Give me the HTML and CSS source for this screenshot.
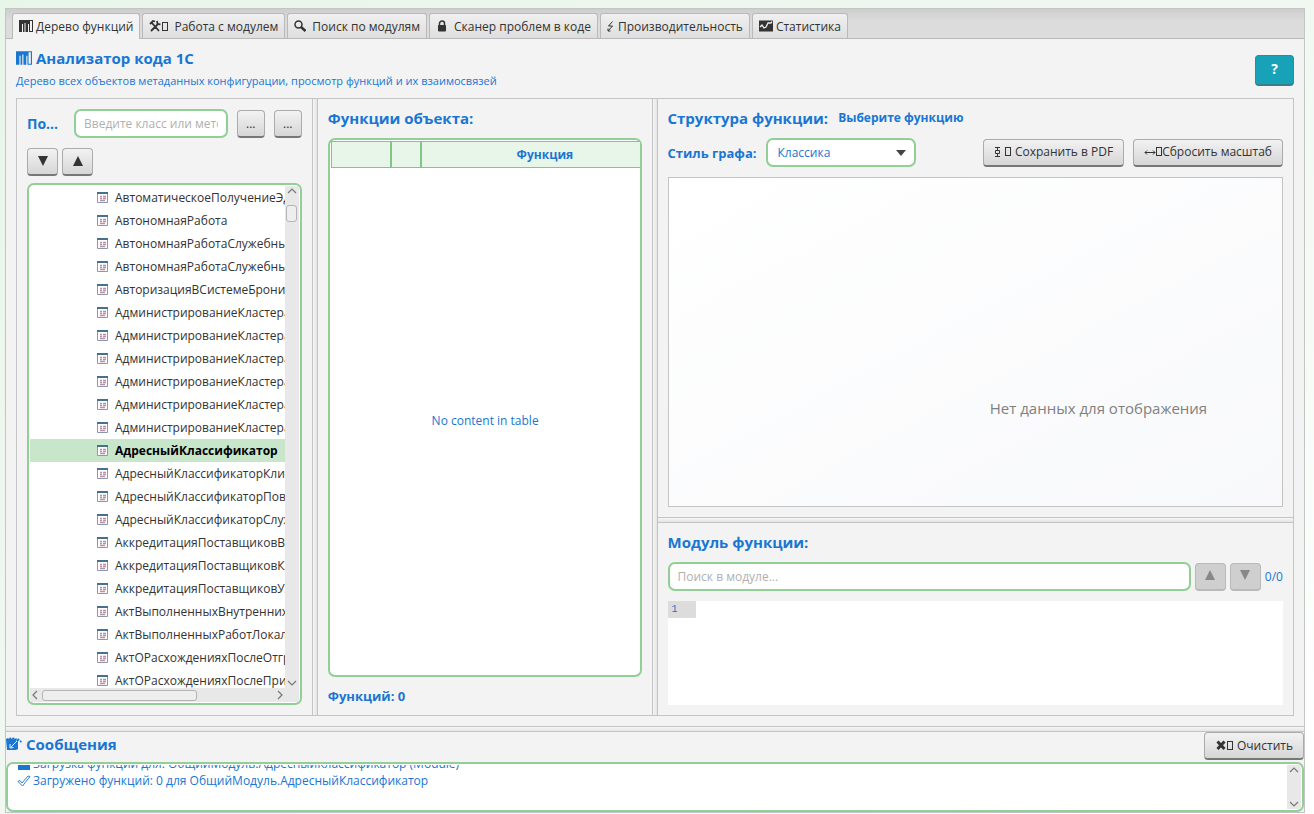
FILE: index.html
```html
<!DOCTYPE html>
<html lang="ru">
<head>
  <meta charset="UTF-8">
  <meta name="viewport" content="width=device-width, initial-scale=1.0">
  <title>Анализатор кода 1С</title>
  <link rel="stylesheet" href="styles.css">
</head>
<body>
  <svg class="sprite" aria-hidden="true">
    <symbol id="chart" viewBox="0 0 14 12">
      <path fill="currentColor" fill-rule="evenodd" d="M0 0h14v12H0zM3 4v8h1V4zM5.500 3v9h1V3zM9 4v8h1V4zM11 1v10h2V1z"/>
    </symbol>
    <symbol id="tools" viewBox="0 0 12 12">
      <path fill="none" stroke="currentColor" stroke-width="1.800" d="M3 3l7 8M9 4l-7 7M1 4l3-3 2 .5M8 1l.5 3 3 .3"/>
    </symbol>
    <symbol id="lens" viewBox="0 0 12 12">
      <circle cx="4.500" cy="4.500" r="3.500" fill="none" stroke="currentColor" stroke-width="1.500"/>
      <path stroke="currentColor" stroke-width="2.400" d="M7 7l4.500 4"/>
    </symbol>
    <symbol id="lock" viewBox="0 0 10 12">
      <path fill="none" stroke="currentColor" stroke-width="1.500" d="M2.500 6V3.500a2.500 2.500 0 0 1 5 0V6"/>
      <rect x="1" y="5" width="8" height="6.500" rx="1" fill="currentColor"/>
    </symbol>
    <symbol id="bolt" viewBox="0 0 7 12">
      <path fill="none" stroke="currentColor" d="M5.500 1.500L1.500 6h4L1 11M1 8.500V11h2.500"/>
    </symbol>
    <symbol id="trend" viewBox="0 0 14 12">
      <rect y=".5" width="14" height="11" fill="currentColor"/>
      <path fill="none" stroke="#eee" stroke-width="1.300" d="M1 7l2-2 2 3 2-1 2-4h3l1-1.500"/>
    </symbol>
    <symbol id="note" viewBox="0 0 16 14">
      <path fill="currentColor" d="M0 2l2-1 1 1 1-2 2 2 1-2 2 2 1-1 1 1-1 2 2-1v9l-2 1H1z"/>
      <path stroke="#f3f3f3" stroke-width="1" fill="none" d="M5 10l6-6M4 7v4l3.500-.5"/>
      <path stroke="currentColor" stroke-width="2" d="M11 4l2-2M14 4l1.500 1"/>
    </symbol>
    <symbol id="cabinet" viewBox="0 0 7 12">
      <path fill="none" stroke="currentColor" d="M1 1.500h5M1 10.500h5M1.500 4.500h4v3h-4zM3.500 1v3M3.500 8v3"/>
    </symbol>
    <symbol id="resize" viewBox="0 0 12 12">
      <path fill="none" stroke="currentColor" d="M1 6.500h10M3 4.500l-2 2 2 2M9 4.500l2 2-2 2"/>
    </symbol>
    <symbol id="cross" viewBox="0 0 12 12">
      <path stroke="currentColor" stroke-width="3" d="M2.500 2.500l7 7.500M9.500 2.500l-7 7.500"/>
    </symbol>
    <symbol id="check" viewBox="0 0 14 12">
      <path fill="none" stroke="currentColor" stroke-width=".9" d="M1 6.500l2-1 2 2.500L11 1l2 .5L5.500 11z"/>
    </symbol>
    <symbol id="folder" viewBox="0 0 14 12">
      <path fill="currentColor" d="M1 1h5l1 2h6v9H1z"/>
    </symbol>
    <symbol id="module" viewBox="0 0 11 11">
      <path fill="#fff" stroke="#8a97ad" d="M.5.5h10v10H.5z"/>
      <path fill="#47708f" d="M0 0h11v2H0z"/>
      <path stroke="#b98fa6" stroke-width="1.300" d="M3 4.500h2M6 4.500h3M3 6.500h2M6 6.500h3M3 8.500h5"/>
    </symbol>
    <symbol id="up" viewBox="0 0 12 12"><path fill="currentColor" d="M6 0l6 12H0z"/></symbol>
    <symbol id="down" viewBox="0 0 12 12"><path fill="currentColor" d="M6 12L0 0h12z"/></symbol>
    <symbol id="chev-up" viewBox="0 0 10 10"><path fill="none" stroke="#777" stroke-width="1.200" d="M1 7l4-4 4 4"/></symbol>
    <symbol id="chev-down" viewBox="0 0 10 10"><path fill="none" stroke="#777" stroke-width="1.200" d="M1 3l4 4 4-4"/></symbol>
    <symbol id="chev-left" viewBox="0 0 10 10"><path fill="none" stroke="#777" stroke-width="1.200" d="M7 1L3 5l4 4"/></symbol>
    <symbol id="chev-right" viewBox="0 0 10 10"><path fill="none" stroke="#777" stroke-width="1.200" d="M3 1l4 4-4 4"/></symbol>
  </svg>

  <div class="window">
    <nav class="tabs" role="tablist">
      <button class="tab active" role="tab"><svg class="icon wide"><use href="#chart"/></svg>Дерево функций</button>
      <button class="tab" role="tab"><svg class="icon"><use href="#tools"/></svg><i class="box"></i>Работа с модулем</button>
      <button class="tab" role="tab"><svg class="icon"><use href="#lens"/></svg>Поиск по модулям</button>
      <button class="tab" role="tab"><svg class="icon"><use href="#lock"/></svg>Сканер проблем в коде</button>
      <button class="tab" role="tab"><svg class="icon narrow"><use href="#bolt"/></svg>Производительность</button>
      <button class="tab" role="tab"><svg class="icon wide"><use href="#trend"/></svg>Статистика</button>
    </nav>

    <main class="content">
      <header class="header">
        <div>
          <h1><svg class="icon title-icon"><use href="#chart"/></svg>Анализатор кода 1С</h1>
          <p class="subtitle">Дерево всех объектов метаданных конфигурации, просмотр функций и их взаимосвязей</p>
        </div>
        <button class="help">?</button>
      </header>

      <div class="split">
        <section class="pane tree-pane">
          <div class="search-row">
            <label for="search">По...</label>
            <input class="field" type="text" id="search" placeholder="Введите класс или метод">
            <button class="btn dots">...</button>
            <button class="btn dots">...</button>
          </div>
          <div class="arrow-row">
            <button class="btn arrow" aria-label="Развернуть"><svg class="icon"><use href="#down"/></svg></button>
            <button class="btn arrow" aria-label="Свернуть"><svg class="icon"><use href="#up"/></svg></button>
          </div>
          <div class="tree">
            <ul class="tree-list" id="tree"></ul>
            <div class="vbar">
              <svg><use href="#chev-up"/></svg>
              <span class="thumb"></span>
              <svg class="end"><use href="#chev-down"/></svg>
            </div>
            <div class="hbar">
              <svg><use href="#chev-left"/></svg>
              <span class="thumb"></span>
              <svg class="end"><use href="#chev-right"/></svg>
            </div>
          </div>
        </section>
        <div class="divider"></div>

        <section class="pane functions-pane">
          <h2>Функции объекта:</h2>
          <div class="table-box">
            <table>
              <thead>
                <tr><th class="col-icon"></th><th class="col-flag"></th><th>Функция</th></tr>
              </thead>
            </table>
            <p class="empty">No content in table</p>
          </div>
          <p class="count">Функций: 0</p>
        </section>
        <div class="divider"></div>

        <div class="right">
          <section class="pane graph-pane">
            <div class="graph-title">
              <h2>Структура функции:</h2>
              <span class="hint">Выберите функцию</span>
            </div>
            <div class="graph-tools">
              <label for="style">Стиль графа:</label>
              <div class="select-box">
                <select class="field" id="style">
                  <option>Классика</option>
                </select>
              </div>
              <button class="btn push"><svg class="icon narrow"><use href="#cabinet"/></svg><i class="box"></i>Сохранить в PDF</button>
              <button class="btn"><svg class="icon tight"><use href="#resize"/></svg><i class="box tight"></i>Сбросить масштаб</button>
            </div>
            <div class="viewport">
              <div class="canvas">Нет данных для отображения</div>
            </div>
          </section>
          <div class="divider horizontal"></div>
          <section class="pane module-pane">
            <h2>Модуль функции:</h2>
            <div class="module-search">
              <input class="field" type="text" placeholder="Поиск в модуле..." aria-label="Поиск в модуле">
              <button class="btn arrow" disabled aria-label="Назад"><svg class="icon"><use href="#up"/></svg></button>
              <button class="btn arrow" disabled aria-label="Вперёд"><svg class="icon"><use href="#down"/></svg></button>
              <span class="found">0/0</span>
            </div>
            <div class="code"><span class="line-no">1</span></div>
          </section>
        </div>
      </div>
    </main>

    <div class="divider horizontal"></div>

    <footer class="messages">
      <div class="messages-head">
        <h2><svg class="icon note"><use href="#note"/></svg>Сообщения</h2>
        <button class="btn"><svg class="icon tight"><use href="#cross"/></svg><i class="box"></i>Очистить</button>
      </div>
      <div class="log">
        <div class="log-lines">
          <p><svg class="icon wide"><use href="#folder"/></svg>Загрузка функций для: ОбщийМодуль.АдресныйКлассификатор (Module)</p>
          <p><svg class="icon wide"><use href="#check"/></svg>Загружено функций: 0 для ОбщийМодуль.АдресныйКлассификатор</p>
        </div>
        <div class="vbar">
          <svg><use href="#chev-up"/></svg>
          <svg class="end"><use href="#chev-down"/></svg>
        </div>
      </div>
    </footer>
  </div>

  <script>
    const modules = [
      'АвтоматическоеПолучениеЭДО',
      'АвтономнаяРабота',
      'АвтономнаяРаботаСлужебный',
      'АвтономнаяРаботаСлужебный',
      'АвторизацияВСистемеБронирования',
      'АдминистрированиеКластера',
      'АдминистрированиеКластера',
      'АдминистрированиеКластера',
      'АдминистрированиеКластера',
      'АдминистрированиеКластера',
      'АдминистрированиеКластера',
      'АдресныйКлассификатор',
      'АдресныйКлассификаторКлиент',
      'АдресныйКлассификаторПовтИсп',
      'АдресныйКлассификаторСлужебный',
      'АккредитацияПоставщиковВызов',
      'АккредитацияПоставщиковКлиент',
      'АккредитацияПоставщиковУХ',
      'АктВыполненныхВнутреннихРабот',
      'АктВыполненныхРаботЛокализация',
      'АктОРасхожденияхПослеОтгрузки',
      'АктОРасхожденияхПослеПриемки'
    ];
    const selected = 'АдресныйКлассификатор';

    document.getElementById('tree').innerHTML = modules.map(name => `
      <li class="${name === selected ? 'selected' : ''}"><svg><use href="#module"/></svg>${name}</li>
    `).join('');
  </script>
</body>
</html>
```
FILE: styles.css
```css
* {
  box-sizing: border-box;
}

body {
  margin: 0;
  padding: 8px 9px 1px 5px;
  height: 100vh;
  display: flex;
  font-family: "Open Sans", "Noto Sans", sans-serif;
  font-size: 12px;
  line-height: 18px;
  color: #1976d2;
  background: linear-gradient(to bottom right, #e8f5e9, #f1f8f2 50%, #fff);
}

h1, h2, p, ul {
  margin: 0;
  padding: 0;
}

h1, h2 {
  font-size: 15px;
  line-height: 18px;
}

button, input, select {
  font-family: inherit;
  font-size: 12px;
}

.sprite {
  position: absolute;
  width: 0;
  height: 0;
}

.icon {
  width: 12px;
  height: 12px;
  margin-right: 4px;
  flex: none;
}

.icon.wide {
  width: 14px;
  margin-right: 2px;
}

.icon.narrow {
  width: 7px;
  margin-right: 4px;
}

.icon.tight {
  margin-right: 0;
}

/* empty glyph box after some icons */
.box {
  width: 6px;
  height: 9px;
  margin-right: 4px;
  border: 1px solid currentColor;
  flex: none;
}

.tab .icon {
  margin-right: 6px;
}

.tab .icon.wide {
  margin-right: 3px;
}

.tab .icon.narrow {
  margin-right: 4px;
}

.tab .icon + .box {
  margin-left: -5px;
  margin-right: 6px;
}

.box.tight {
  margin-right: 0;
}

.window {
  flex: 1;
  min-width: 0;
  display: flex;
  flex-direction: column;
  border: 1px solid #c4c4c4;
  background: #f3f3f3;
}

/* tabs */
.tabs {
  display: flex;
  gap: 2px;
  height: 30px;
  flex: none;
  padding: 4px 6px 0;
  background: linear-gradient(#cdcdcd, #dcdcdc 40%, #dcdcdc);
  border-bottom: 1px solid #b9b9b9;
}

.tab {
  display: flex;
  align-items: center;
  padding: 1px 6px;
  color: #333;
  white-space: nowrap;
  border: 1px solid #b9b9b9;
  border-bottom: 0;
  border-radius: 3px 3px 0 0;
  background: linear-gradient(#f0f0f0, #dedede);
}

.tab.active {
  margin-bottom: -1px;
  padding-bottom: 2px;
  background: #f3f3f3;
}

/* main part */
.content {
  flex: 1;
  min-height: 0;
  display: flex;
  flex-direction: column;
  padding: 10px;
}

.header {
  display: flex;
  justify-content: space-between;
  align-items: flex-start;
  height: 49px;
  flex: none;
}

.header h1 {
  display: flex;
  align-items: center;
}

.title-icon {
  width: 16px;
  height: 14px;
}

.subtitle {
  margin-top: 5px;
  font-size: 11px;
}

.help {
  width: 39px;
  height: 31px;
  margin-top: 6px;
  padding: 0 0 3px;
  color: #fff;
  font-size: 14px;
  font-weight: bold;
  background: #17a2b8;
  border: 1px solid #1a93a6;
  border-bottom: 2px solid #3b7e8a;
  border-radius: 4px;
}

.split {
  flex: 1;
  min-height: 0;
  display: grid;
  grid-template-columns: 295fr 6px 334fr 6px 636fr;
  border: 1px solid #c4c4c4;
}

.divider {
  border: solid #c4c4c4;
  border-width: 0 1px;
  background: linear-gradient(to right, #f6f6f6, #e4e4e4);
}

.divider.horizontal {
  height: 6px;
  flex: none;
  border-width: 1px 0;
  background: linear-gradient(#f6f6f6, #e4e4e4);
}

.pane {
  min-width: 0;
  min-height: 0;
  padding: 10px;
  display: flex;
  flex-direction: column;
}

.field {
  min-width: 0;
  height: 29px;
  padding: 0 8px;
  border: 2px solid #92cf96;
  border-radius: 7px;
  background: #fff;
  color: #1976d2;
  outline: none;
}

.field::placeholder {
  color: #b0b0b0;
}

.btn {
  display: flex;
  align-items: center;
  justify-content: center;
  height: 28px;
  padding: 0 10px 1px;
  color: #333;
  white-space: nowrap;
  border: 1px solid #ababab;
  border-bottom: 2px solid #777;
  border-radius: 4px;
  background: linear-gradient(#f2f2f2, #d6d6d6);
}

.btn.arrow {
  width: 31px;
  padding: 0 0 2px;
  flex: none;
}

.btn.arrow .icon {
  width: 10px;
  height: 10px;
  margin: 0;
}

.btn.dots {
  width: 28px;
  padding: 0;
  flex: none;
}

.btn:disabled {
  color: #888;
  border-color: #b9b9b9;
  background: #cfcfcf;
}

/* tree */
.search-row {
  display: flex;
  align-items: center;
  gap: 9px;
}

.search-row label {
  width: 38px;
  flex: none;
  font-size: 14px;
  font-weight: bold;
}

.search-row .field {
  flex: 1;
}

.arrow-row {
  display: flex;
  gap: 4px;
  margin: 10px 0 7px;
}

.tree {
  flex: 1;
  min-height: 0;
  display: grid;
  grid-template: minmax(0, 1fr) 14px / minmax(0, 1fr) 14px;
  padding: 1px;
  border: 2px solid #92cf96;
  border-radius: 7px;
  background: #fff;
}

.tree-list {
  overflow: hidden;
  list-style: none;
  color: #333;
}

.tree-list li {
  display: flex;
  align-items: center;
  gap: 7px;
  height: 23px;
  padding-left: 67px;
  white-space: nowrap;
}

.tree-list svg {
  width: 11px;
  height: 11px;
  flex: none;
}

.tree-list .selected {
  color: #000;
  font-weight: bold;
  background: #c8e6c9;
}

.vbar, .hbar {
  display: flex;
  align-items: center;
  background: #e8e8e8;
}

.vbar {
  flex-direction: column;
  width: 14px;
}

.hbar {
  grid-column: 1 / 3;
  padding-right: 14px;
}

.vbar svg, .hbar svg {
  width: 10px;
  height: 10px;
  flex: none;
}

.vbar .end {
  margin-top: auto;
}

.hbar .end {
  margin-left: auto;
}

.thumb {
  border: 1px solid #b5b5b5;
  border-radius: 3px;
  background: #eee;
}

.vbar .thumb {
  width: 11px;
  height: 17px;
  margin-top: 9px;
}

.hbar .thumb {
  width: 155px;
  height: 11px;
  margin-left: 2px;
}

/* functions table */
.table-box {
  flex: 1;
  margin-top: 11px;
  padding: 1px 0 0 1px;
  display: flex;
  flex-direction: column;
  border: 2px solid #92cf96;
  border-radius: 7px;
  background: #fff;
}

table {
  width: 100%;
  table-layout: fixed;
  border-collapse: collapse;
}

th {
  height: 26px;
  padding: 0 0 0 28px;
  font-size: 12px;
  background: #e8f5e9;
  border: 1px solid #81c784;
  border-right: 2px solid #81c784;
}

th:last-child {
  border-right: 0;
}

.col-icon {
  width: 60px;
}

.col-flag {
  width: 30px;
}

.empty {
  margin: auto;
  padding-bottom: 2px;
}

.count {
  margin-top: 10px;
  font-size: 13px;
  font-weight: bold;
}

/* graph */
.right {
  min-width: 0;
  min-height: 0;
  display: flex;
  flex-direction: column;
}

.graph-pane {
  flex: 1;
}

.graph-title {
  display: flex;
  align-items: center;
  gap: 10px;
}

.hint {
  font-size: 12px;
  font-weight: bold;
}

.graph-tools {
  display: flex;
  align-items: center;
  gap: 9px;
  margin: 11px 0 10px;
}

.graph-tools label {
  font-size: 13px;
  font-weight: bold;
}

.select-box {
  position: relative;
  width: 150px;
}

.select-box .field {
  width: 100%;
  padding-left: 10px;
  appearance: none;
}

.select-box::after {
  content: "";
  position: absolute;
  right: 10px;
  top: 12px;
  border: 5px solid transparent;
  border-top: 6px solid #444;
  border-bottom: 0;
  pointer-events: none;
}

.push {
  margin-left: auto;
}

.viewport {
  flex: 1;
  min-height: 0;
  overflow: hidden;
  border: 1px solid #c4c4c4;
  background: #fff;
}

/* the graph area is larger than the part on show */
.canvas {
  width: 860px;
  height: 460px;
  display: flex;
  align-items: center;
  justify-content: center;
  font-size: 15px;
  color: #808080;
  background: linear-gradient(to bottom right, #fff, #f5f6f9);
}

/* module text */
.module-search {
  display: flex;
  align-items: center;
  gap: 4px;
  margin: 11px 0 10px;
}

.module-search .field {
  flex: 1;
}

.code {
  height: 104px;
  background: #fff;
}

.line-no {
  display: block;
  width: 28px;
  height: 17px;
  padding-left: 4px;
  font-family: "Liberation Mono", monospace;
  font-size: 10px;
  background: #dcdcdc;
}

/* messages */
.messages-head {
  display: flex;
  justify-content: space-between;
  align-items: flex-start;
}

.messages-head h2 {
  display: flex;
  align-items: center;
  margin-top: 3px;
}

.note {
  width: 16px;
  height: 14px;
}

.log {
  display: flex;
  height: 50px;
  margin-top: 2px;
  padding: 1px;
  border: 2px solid #92cf96;
  border-radius: 7px;
  background: #fff;
}

.log-lines {
  flex: 1;
  min-width: 0;
  display: flex;
  flex-direction: column;
  justify-content: flex-end;
  overflow: hidden;
  padding: 0 8px 20px;
}

.log-lines p {
  display: flex;
  align-items: center;
  flex: none;
  height: 17px;
}
```
